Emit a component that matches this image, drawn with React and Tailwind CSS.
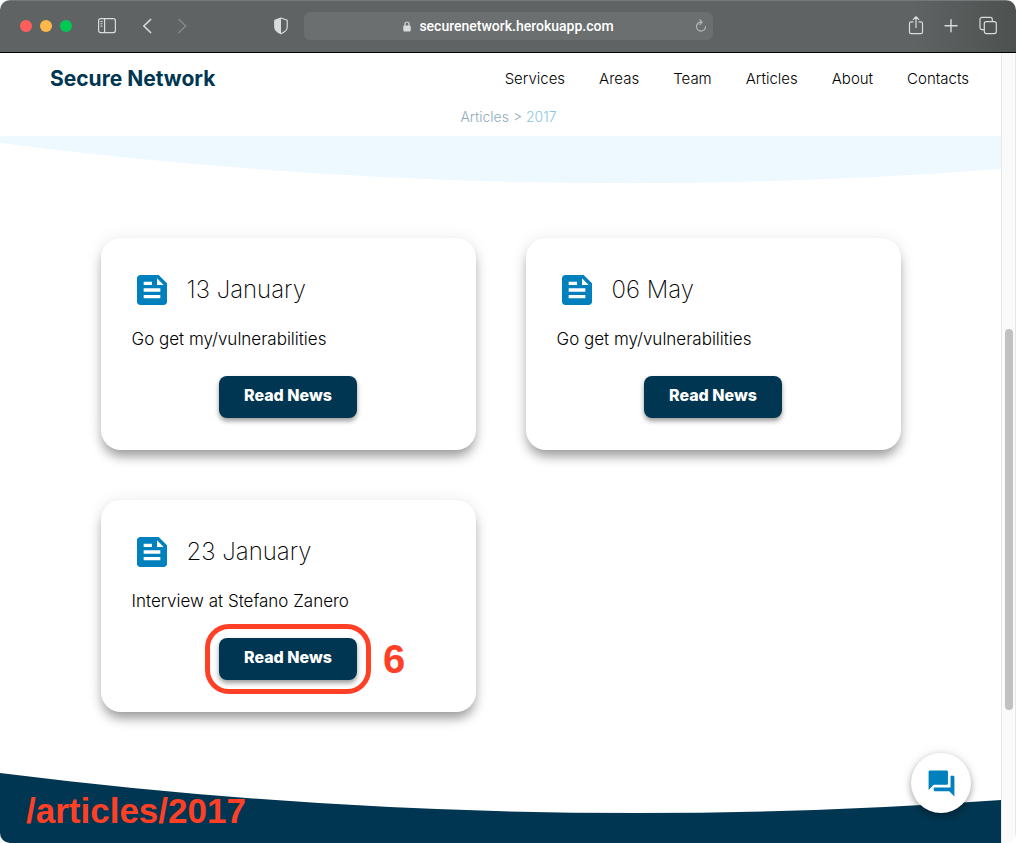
const NAV = ['Services', 'Areas', 'Team', 'Articles', 'About', 'Contacts'];

const ARTICLES = [
  { date: '13 January', text: 'Go get my/vulnerabilities' },
  { date: '06 May', text: 'Go get my/vulnerabilities' },
  { date: '23 January', text: 'Interview at Stefano Zanero', mark: '6' },
];

function Toolbar() {
  const line = { fill: 'none', stroke: 'currentColor', strokeLinecap: 'round', strokeLinejoin: 'round' };
  return (
    <div className="flex h-[53px] shrink-0 items-center border-t border-b border-t-[#747878] border-b-black bg-linear-to-r from-[#5f6363] from-90% to-[#4d5150] pr-[18px] pb-px pl-5 text-[#d9dcdc]">
      <div className="flex w-[284px] shrink-0 items-center">
        <div className="flex gap-2">
          <span className="size-3 rounded-full bg-[#ff5f5b]" />
          <span className="size-3 rounded-full bg-[#ffb84a]" />
          <span className="size-3 rounded-full bg-[#00c853]" />
        </div>
        <button type="button" aria-label="Sidebar" className="ml-[25px]">
          <svg width="20" height="18" viewBox="0 0 20 18" {...line} strokeWidth="1.2">
            <rect x="1.6" y="1.6" width="16.8" height="14" rx="2" />
            <path d="M7.6 1.6v14" />
            <path d="M3.8 4.5h1.4M3.8 6.8h1.4M3.8 9.1h1.4" strokeWidth="1" />
          </svg>
        </button>
        <button type="button" aria-label="Back" className="ml-6">
          <svg width="12" height="16" viewBox="0 0 12 16" {...line} strokeWidth="1.7">
            <path d="M9.6 1.5 2.8 8 9.6 14.5" />
          </svg>
        </button>
        <button type="button" aria-label="Forward" className="ml-6 text-[#828686]">
          <svg width="12" height="16" viewBox="0 0 12 16" {...line} strokeWidth="1.7">
            <path d="M2 1.5 8.8 8 2 14.5" />
          </svg>
        </button>
        <button type="button" aria-label="Privacy report" className="mr-[15px] ml-auto">
          <svg width="16" height="18" viewBox="0 0 16 18">
            <path d="M8 1 14.2 3.2V10.5C14.2 13.5 11.2 15.3 8 16.8 4.8 15.3 1.8 13.5 1.8 10.5V3.2Z" fill="none" stroke="currentColor" strokeWidth="1.2" strokeLinejoin="round" />
            <path d="M8 1V16.8C4.8 15.3 1.8 13.5 1.8 10.5V3.2Z" fill="currentColor" />
          </svg>
        </button>
      </div>
      <div className="flex h-7 min-w-0 flex-1 items-center rounded-md bg-[#6b6f6f] pr-1">
        <div className="flex flex-1 items-center justify-center gap-2">
          <svg width="8" height="11" viewBox="0 0 8 11" className="ml-5">
            <path d="M2 5V3a2 2 0 0 1 4 0v2" fill="none" stroke="currentColor" strokeWidth="1.2" />
            <rect x="0.3" y="4.6" width="7.4" height="5.8" rx="1" fill="currentColor" />
          </svg>
          <span className="font-[Roboto,sans-serif] text-sm font-medium text-white">securenetwork.herokuapp.com</span>
        </div>
        <button type="button" aria-label="Reload" className="text-[#b4b7b7]">
          <svg width="16" height="16" viewBox="0 0 16 16" {...line} strokeWidth="1.2">
            <path d="M8.4 4.2a4.5 4.5 0 1 0 4.1 4.5M6.8 1.8l2.4 2.4-2.4 2.4" />
          </svg>
        </button>
      </div>
      <div className="flex w-[285px] shrink-0 items-center justify-end gap-5">
        <button type="button" aria-label="Share">
          <svg width="16" height="20" viewBox="0 0 16 20" {...line} strokeWidth="1.2">
            <path d="M5 5.9H3.1a1.6 1.6 0 0 0-1.6 1.6v8.6a1.6 1.6 0 0 0 1.6 1.6h9.8a1.6 1.6 0 0 0 1.6-1.6V7.5a1.6 1.6 0 0 0-1.6-1.6H11M8 11.4V.8M5.3 3.4 8 .7 10.7 3.4" />
          </svg>
        </button>
        <button type="button" aria-label="New tab">
          <svg width="14" height="14" viewBox="0 0 14 14" {...line} strokeWidth="1.4">
            <path d="M7 .7v12M1 6.7h12" />
          </svg>
        </button>
        <button type="button" aria-label="Tab overview">
          <svg width="20" height="20" viewBox="0 0 20 20" {...line} strokeWidth="1.2">
            <rect x="6.3" y="5.6" width="12" height="12" rx="2" />
            <path d="M6.3 13.6H4a2 2 0 0 1-2-2V3.3a2 2 0 0 1 2-2h8.3a2 2 0 0 1 2 2v2.3" />
          </svg>
        </button>
      </div>
    </div>
  );
}

function Card({ date, text, mark }) {
  return (
    <article className="h-[212px] rounded-[20px] bg-white px-[31px] pt-8 shadow-[0_8px_12px_-2px_rgba(0,0,0,0.38),0_0_18px_rgba(0,0,0,0.07)]">
      <div className="flex h-10 items-center gap-[15px]">
        <svg width="40" height="40" viewBox="0 0 24 24" fill="#0080bd" className="shrink-0">
          <path d="M16 3H5c-1.1 0-2 .9-2 2v14c0 1.1.9 2 2 2h14c1.1 0 2-.9 2-2V8l-5-5zM7 7h5v2H7V7zm10 10H7v-2h10v2zm0-4H7v-2h10v2zm-2-4V5l4 4h-4z" />
        </svg>
        <h2 className="text-2xl font-extralight text-black">{date}</h2>
      </div>
      <p className="mt-[17px] text-[17px] leading-6 font-light text-black">{text}</p>
      <div className="relative mx-auto mt-[25px] w-[138px]">
        <button type="button" className="block h-[42px] w-full rounded-lg bg-[#003651] pb-1 text-base font-extrabold text-white shadow-[0_3px_5px_rgba(0,0,0,0.4)]">
          Read News
        </button>
        {mark && (
          <>
            <span className="pointer-events-none absolute -inset-[14px] rounded-3xl border-5 border-[#ff4026]" />
            <span className="absolute top-0 left-full ml-[26px] font-['Liberation_Sans',sans-serif] text-[40px] leading-[42px] font-bold text-[#ff4026]">{mark}</span>
          </>
        )}
      </div>
    </article>
  );
}

export default function App() {
  return (
    <div className="flex h-screen flex-col overflow-hidden rounded-[10px] bg-white">
      <Toolbar />
      <div className="flex min-h-0 flex-1">
        <div className="relative flex min-w-0 flex-1 flex-col overflow-hidden font-[Inter,sans-serif]">
          <header className="shrink-0">
            <div className="flex h-[52px] items-center justify-between pr-8 pl-[50px]">
              <a href="#home" className="text-[21px] font-bold text-[#003651]">Secure Network</a>
              <nav className="flex gap-[34px] text-[15px] font-light text-black">
                {NAV.map((item) => (
                  <a key={item} href={`#${item.toLowerCase()}`}>{item}</a>
                ))}
              </nav>
            </div>
            <div className="h-[31px] pt-0.5 pl-4 text-center text-sm font-light text-[#8fabb8]">
              <a href="#articles">Articles</a> &gt; <a href="#2017" className="text-[#8cc6e2]">2017</a>
            </div>
          </header>
          <svg className="block h-[48px] w-full shrink-0" viewBox="0 0 1001 48" preserveAspectRatio="none">
            <path d="M0 0V7Q500 71 1001 33V0Z" fill="#eef9ff" />
          </svg>
          <main className="mx-auto grid w-full max-w-[800px] shrink-0 grid-cols-2 gap-[50px] pt-[54px] pb-[61px]">
            {ARTICLES.map((a) => (
              <Card key={a.date} {...a} />
            ))}
          </main>
          <footer className="flex flex-1 flex-col">
            <svg className="block h-[42px] w-full shrink-0" viewBox="0 0 1001 42" preserveAspectRatio="none">
              <path d="M0 0Q500 63 1001 27V42H0Z" fill="#003651" />
            </svg>
            <div className="flex-1 bg-[#003651]" />
          </footer>
          <span className="absolute bottom-3 left-[26px] font-['Liberation_Sans',sans-serif] text-[35px] leading-10 font-bold text-[#ff4026]">/articles/2017</span>
          <button type="button" aria-label="Chat" className="absolute right-[30px] bottom-[30px] flex size-[60px] items-center justify-center rounded-full bg-white shadow-[0_3px_6px_rgba(0,0,0,0.3),0_0_12px_rgba(0,0,0,0.1)]">
            <svg width="31" height="31" viewBox="0 0 24 24" fill="#0080bd">
              <path d="M21 6h-2v9H6v2c0 .55.45 1 1 1h11l4 4V7c0-.55-.45-1-1-1zm-4 6V3c0-.55-.45-1-1-1H3c-.55 0-1 .45-1 1v14l4-4h10c.55 0 1-.45 1-1z" />
            </svg>
          </button>
        </div>
        <div className="flex w-[15px] shrink-0 flex-col items-center border-x border-[#e8e8e8] bg-[#fafafa]">
          <div className="flex-[276]" />
          <div className="w-2 flex-[381] rounded-full bg-[#c1c1c1]" />
          <div className="flex-[133]" />
        </div>
      </div>
    </div>
  );
}
